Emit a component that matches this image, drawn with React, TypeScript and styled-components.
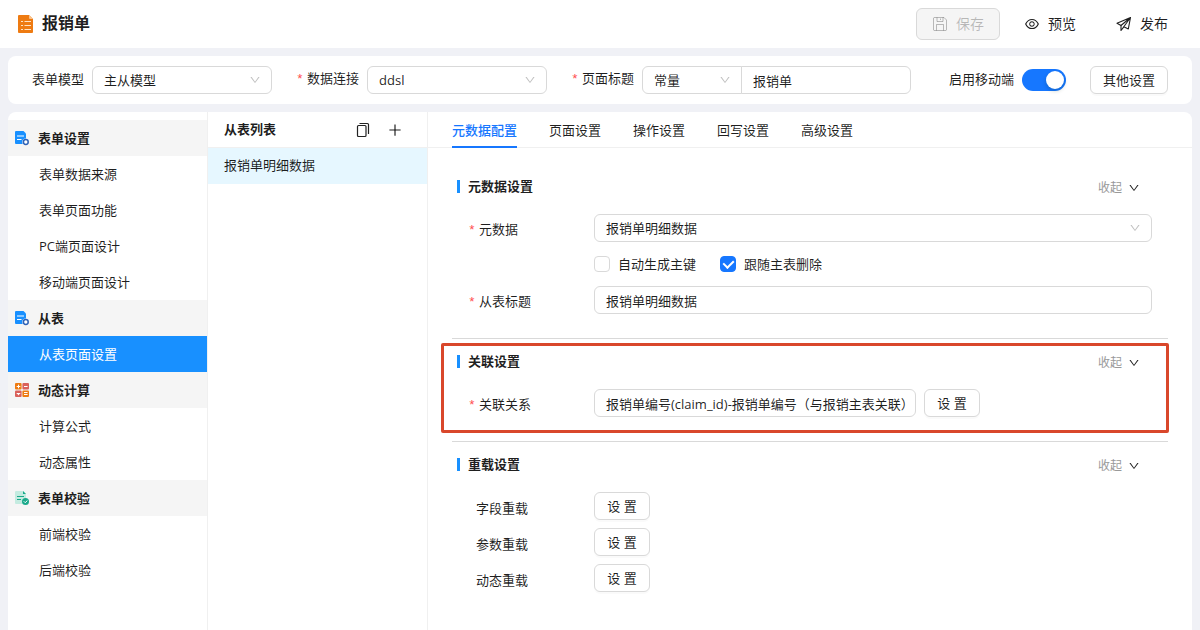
import React from "react";
import styled, { createGlobalStyle, css } from "styled-components";
import { AiOutlineDown, AiOutlineEye, AiOutlinePlus } from "react-icons/ai";

const GlobalStyle = createGlobalStyle`
  * { box-sizing: border-box; }
  body {
    margin: 0;
    background: #f0f1f6;
    color: rgba(0, 0, 0, 0.88);
    font: 13px/20px "Open Sans", "Noto Sans CJK SC", sans-serif;
  }
  button, input, select { font: inherit; color: inherit; }
`;

const Page = styled.div`
  display: flex;
  flex-direction: column;
  min-height: 100vh;
`;

const Header = styled.header`
  display: flex;
  align-items: center;
  gap: 8px;
  height: 48px;
  padding: 0 16px;
  background: #fff;
`;

const Title = styled.h1`
  flex: 1;
  margin: 0;
  padding-bottom: 2px;
  font-size: 16px;
  line-height: 24px;
  font-weight: 700;
`;

const HeaderButton = styled.button`
  display: flex;
  align-items: center;
  justify-content: center;
  gap: 8px;
  height: 32px;
  padding: 0 15px;
  border: 1px solid transparent;
  border-radius: 6px;
  background: transparent;
  font-size: 14px;
  svg { width: 16px; height: 16px; }
  &:disabled {
    border-color: #d9d9d9;
    background: #f5f5f5;
    color: rgba(0, 0, 0, 0.25);
  }
`;

const ConfigBar = styled.section`
  display: flex;
  align-items: center;
  gap: 24px;
  height: 48px;
  margin: 8px;
  padding: 0 24px;
  border-radius: 8px;
  background: #fff;
`;

const Field = styled.div<{ $end?: boolean }>`
  display: flex;
  align-items: center;
  gap: 8px;
  white-space: nowrap;
  ${(p) => p.$end && css`margin-left: auto;`}
`;

const requiredMark = css`
  &::before {
    content: "*";
    display: inline-block;
    width: 11px;
    color: #ff4d4f;
    font-family: "Liberation Mono", monospace;
  }
`;

const FieldLabel = styled.label<{ $required?: boolean }>`
  padding-bottom: 2px;
  ${(p) => p.$required && requiredMark}
`;

const controlBox = css`
  height: 28px;
  border: 1px solid #d9d9d9;
  border-radius: 6px;
  background: #fff;
`;

const SelectWrap = styled.div<{ $width?: number }>`
  position: relative;
  ${(p) => (p.$width ? css`width: ${p.$width}px;` : css`flex: 1;`)}
  svg {
    position: absolute;
    top: 8px;
    right: 11px;
    width: 12px;
    height: 12px;
    color: rgba(0, 0, 0, 0.25);
    pointer-events: none;
  }
`;

const SelectBox = styled.select`
  ${controlBox}
  display: block;
  width: 100%;
  padding: 0 32px 0 11px;
  appearance: none;
`;

const TextInput = styled.input<{ $width?: number }>`
  ${controlBox}
  padding: 0 4px 0 11px;
  min-width: 0;
  ${(p) => (p.$width ? css`width: ${p.$width}px;` : css`flex: 1;`)}
`;

const Compact = styled.div`
  display: flex;
  select { border-radius: 6px 0 0 6px; }
  input { margin-left: -1px; border-radius: 0 6px 6px 0; }
`;

const Switch = styled.input`
  display: flex;
  align-items: center;
  width: 44px;
  height: 22px;
  margin: 0;
  padding: 2px;
  border-radius: 11px;
  appearance: none;
  background: #bfbfbf;
  &::before {
    content: "";
    width: 18px;
    height: 18px;
    border-radius: 9px;
    background: #fff;
    box-shadow: 0 2px 4px rgba(0, 35, 11, 0.2);
  }
  &:checked {
    justify-content: flex-end;
    background: #1677ff;
  }
`;

const Button = styled.button`
  ${controlBox}
  min-width: 56px;
  padding: 0 12px;
  box-shadow: 0 2px 0 rgba(0, 0, 0, 0.02);
`;

const Workspace = styled.main`
  display: flex;
  flex: 1;
  margin: 0 8px;
  border-radius: 8px 8px 0 0;
  background: #fff;
`;

const Sidebar = styled.nav`
  flex: 0 0 200px;
  padding-top: 8px;
  border-right: 1px solid #f0f0f0;
`;

const GroupTitle = styled.h2`
  display: flex;
  align-items: center;
  gap: 8px;
  height: 36px;
  margin: 0;
  padding-left: 6px;
  background: #f5f5f5;
  font-size: 13px;
  font-weight: 700;
`;

const MenuLink = styled.a<{ $active?: boolean }>`
  display: flex;
  align-items: center;
  height: 36px;
  padding-left: 31px;
  color: ${(p) => (p.$active ? "#fff" : "inherit")};
  background: ${(p) => (p.$active ? "#1890ff" : "transparent")};
  text-decoration: none;
`;

const TableList = styled.aside`
  flex: 0 0 220px;
  border-right: 1px solid #f0f0f0;
`;

const ListHeader = styled.div`
  display: flex;
  align-items: center;
  gap: 16px;
  height: 36px;
  padding: 0 24px 0 16px;
  border-bottom: 1px solid #f0f0f0;
`;

const ListTitle = styled.h2`
  flex: 1;
  margin: 0;
  padding-bottom: 2px;
  font-size: 13px;
  font-weight: 600;
`;

const IconButton = styled.button`
  display: flex;
  padding: 0;
  border: 0;
  background: transparent;
`;

const ListItem = styled.a`
  display: flex;
  align-items: center;
  height: 36px;
  padding: 0 16px 2px;
  background: #e6f7ff;
  color: inherit;
  text-decoration: none;
`;

const Content = styled.div`
  flex: 1;
  min-width: 0;
`;

const Tabs = styled.div`
  display: flex;
  gap: 32px;
  height: 36px;
  padding: 0 24px;
  border-bottom: 1px solid #f0f0f0;
`;

const Tab = styled.button<{ $active?: boolean }>`
  height: 36px;
  padding: 2px 0 0;
  border: 0;
  border-bottom: 2px solid ${(p) => (p.$active ? "#1677ff" : "transparent")};
  background: transparent;
  color: ${(p) => (p.$active ? "#1677ff" : "inherit")};
  font-weight: ${(p) => (p.$active ? 500 : 400)};
`;

const Sections = styled.div`
  padding: 16px 24px;
`;

const Section = styled.section`
  position: relative;
  padding: 10px 0 24px;
  border-bottom: 1px solid #d9d9d9;
  &:last-child { border-bottom: 0; }
`;

const SectionHeader = styled.div`
  display: flex;
  align-items: center;
  justify-content: space-between;
  height: 24px;
  margin-bottom: 16px;
  padding: 0 28px 0 5px;
`;

const SectionTitle = styled.h3`
  display: flex;
  align-items: center;
  gap: 8px;
  margin: 0;
  font-size: 13px;
  font-weight: 700;
  &::before {
    content: "";
    width: 3px;
    height: 13px;
    background: #1890ff;
  }
`;

const Collapse = styled.button`
  display: flex;
  align-items: center;
  gap: 6px;
  padding: 3px 0 0;
  border: 0;
  background: transparent;
  color: #999;
  font-size: 12px;
  svg { width: 12px; height: 12px; color: #222; }
`;

const Rows = styled.div`
  display: flex;
  flex-direction: column;
  gap: 8px;
  padding-right: 16px;
`;

const Row = styled.div`
  display: flex;
  align-items: center;
  height: 28px;
`;

const RowLabel = styled.label<{ $required?: boolean }>`
  flex: 0 0 142px;
  padding: 4px 0 0 ${(p) => (p.$required ? 16 : 24)}px;
  ${(p) => p.$required && requiredMark}
`;

const RowControls = styled.div`
  display: flex;
  flex: 1;
  align-items: center;
  gap: 8px;
`;

const CheckLabel = styled.label`
  display: flex;
  align-items: center;
  gap: 8px;
  margin-right: 16px;
`;

const Checkbox = styled.input`
  display: grid;
  place-items: center;
  width: 16px;
  height: 16px;
  margin: 0;
  border: 1px solid #d9d9d9;
  border-radius: 4px;
  appearance: none;
  background: #fff;
  &:checked {
    border-color: #1677ff;
    background: #1677ff;
  }
  &:checked::before {
    content: "";
    width: 5px;
    height: 8px;
    margin-bottom: 2px;
    border: solid #fff;
    border-width: 0 2px 2px 0;
    transform: rotate(45deg);
  }
`;

const Highlight = styled.div`
  position: absolute;
  inset: 4px -1px 8px -11px;
  border: 3px solid #d9472b;
  border-radius: 2px;
  pointer-events: none;
`;

const LogoIcon = () => (
  <svg width="18" height="20" viewBox="0 0 18 20" aria-hidden="true">
    <path d="M3 1h10l4 4V18a1 1 0 0 1-1 1H3a1 1 0 0 1-1-1V2a1 1 0 0 1 1-1z" fill="#ee7b12" />
    <path d="M13 1v3a1 1 0 0 0 1 1H17z" fill="#f9c48e" />
    <path d="M5 7.500h2M8.500 7.500H15M5 11.500h2M8.500 11.500H15M5 15.500h2M8.500 15.500H15" stroke="#ffe3c4" strokeWidth="1.200" />
  </svg>
);

const SaveIcon = () => (
  <svg viewBox="0 0 16 16" fill="none" stroke="currentColor" aria-hidden="true">
    <path d="M1.500 2.500a1 1 0 0 1 1-1H12L14.500 4v9.500a1 1 0 0 1-1 1h-11a1 1 0 0 1-1-1z" />
    <path d="M5 1.500v4h6v-4M8.500 2.500v1.500M4.500 14.500V8.500h7v6" />
  </svg>
);

const SendIcon = () => (
  <svg viewBox="0 0 16 16" fill="none" stroke="currentColor" strokeWidth="1.100" strokeLinejoin="round" aria-hidden="true">
    <path d="M14.500 1.500L1 7.200l4 2.300L14.500 1.500L12.300 13L7.800 10.800z" />
    <path d="M5 9.500v5l2.800-3.700" />
  </svg>
);

const FormIcon = () => (
  <svg width="16" height="16" viewBox="0 0 16 16" aria-hidden="true">
    <path d="M1 2a1 1 0 0 1 1-1h7.500L12 3.500V14H2a1 1 0 0 1-1-1z" fill="#1890ff" />
    <path d="M3 6h7M3 9.500h4.500" stroke="#fff" strokeWidth="1.200" />
    <circle cx="11.800" cy="12" r="3.600" fill="#f5f5f5" />
    <circle cx="11.800" cy="12" r="2.400" fill="#fff" stroke="#2f62b5" strokeWidth="1.500" />
  </svg>
);

const CalcIcon = () => (
  <svg width="16" height="16" viewBox="0 0 16 16" aria-hidden="true">
    <rect x="1" y="1" width="6.600" height="6.600" rx="1" fill="#ee7b12" />
    <rect x="8.400" y="1" width="6.600" height="6.600" rx="1" fill="#d9605a" />
    <rect x="1" y="8.400" width="6.600" height="6.600" rx="1" fill="#d9605a" />
    <rect x="8.400" y="8.400" width="6.600" height="6.600" rx="1" fill="#ee7b12" />
    <path d="M2.700 4.500h3.600M4.500 2.700v3.600M10 4.500h3.600M2.700 11.500h3.600M10 10.500h3.600M10 12.500h3.600" stroke="#fff" />
    <path d="M3.500 12h2l-1 1.500z" fill="#fff" />
  </svg>
);

const CheckIcon = () => (
  <svg width="16" height="16" viewBox="0 0 16 16" aria-hidden="true">
    <path d="M1 2a1 1 0 0 1 1-1h7l3 3v10H2a1 1 0 0 1-1-1z" fill="#c4ebe0" />
    <path d="M9 1v3h3z" fill="#1aa98a" />
    <path d="M3 6.500h7M3 9.500h4" stroke="#1aa98a" strokeWidth="1.200" />
    <circle cx="11.500" cy="11.500" r="3.500" fill="#1aa98a" />
    <path d="M9.800 11.300l1.400 1.400 2.200-2.200" stroke="#fff" fill="none" />
  </svg>
);

const CopyIcon = () => (
  <svg width="16" height="16" viewBox="0 0 16 16" fill="none" stroke="#222" strokeWidth="1.200" aria-hidden="true">
    <rect x="2.500" y="3.500" width="8.500" height="11" rx="1" />
    <path d="M4.500 1.500H12.500a1 1 0 0 1 1 1V12" />
  </svg>
);

const menu = [
  { title: "表单设置", icon: <FormIcon />, items: ["表单数据来源", "表单页面功能", "PC端页面设计", "移动端页面设计"] },
  { title: "从表", icon: <FormIcon />, items: ["从表页面设置"] },
  { title: "动态计算", icon: <CalcIcon />, items: ["计算公式", "动态属性"] },
  { title: "表单校验", icon: <CheckIcon />, items: ["前端校验", "后端校验"] },
];

const activeItem = "从表页面设置";
const tabs = ["元数据配置", "页面设置", "操作设置", "回写设置", "高级设置"];
const overloads = ["字段重载", "参数重载", "动态重载"];

type SelectProps = { id?: string; value: string; width?: number; label?: string };

const Select = ({ id, value, width, label }: SelectProps) => (
  <SelectWrap $width={width}>
    <SelectBox id={id} defaultValue={value} aria-label={label}>
      <option>{value}</option>
    </SelectBox>
    <AiOutlineDown />
  </SelectWrap>
);

type PanelProps = { title: string; marked?: boolean; children: React.ReactNode };

const Panel = ({ title, marked, children }: PanelProps) => (
  <Section>
    <SectionHeader>
      <SectionTitle>{title}</SectionTitle>
      <Collapse type="button">
        收起
        <AiOutlineDown />
      </Collapse>
    </SectionHeader>
    <Rows>{children}</Rows>
    {marked && <Highlight />}
  </Section>
);

export default function App() {
  return (
    <Page>
      <GlobalStyle />
      <Header>
        <LogoIcon />
        <Title>报销单</Title>
        <HeaderButton type="button" disabled><SaveIcon />保存</HeaderButton>
        <HeaderButton type="button"><AiOutlineEye />预览</HeaderButton>
        <HeaderButton type="button"><SendIcon />发布</HeaderButton>
      </Header>

      <ConfigBar>
        <Field>
          <FieldLabel htmlFor="model">表单模型</FieldLabel>
          <Select id="model" value="主从模型" width={180} />
        </Field>
        <Field>
          <FieldLabel htmlFor="source" $required>数据连接</FieldLabel>
          <Select id="source" value="ddsl" width={180} />
        </Field>
        <Field>
          <FieldLabel htmlFor="page-title" $required>页面标题</FieldLabel>
          <Compact>
            <Select value="常量" width={100} label="标题类型" />
            <TextInput id="page-title" defaultValue="报销单" $width={170} />
          </Compact>
        </Field>
        <Field $end>
          <FieldLabel htmlFor="mobile">启用移动端</FieldLabel>
          <Switch id="mobile" type="checkbox" role="switch" defaultChecked />
        </Field>
        <Button type="button">其他设置</Button>
      </ConfigBar>

      <Workspace>
        <Sidebar>
          {menu.map((group) => (
            <React.Fragment key={group.title}>
              <GroupTitle>{group.icon}{group.title}</GroupTitle>
              {group.items.map((item) => (
                <MenuLink key={item} href="#" $active={item === activeItem}>{item}</MenuLink>
              ))}
            </React.Fragment>
          ))}
        </Sidebar>

        <TableList>
          <ListHeader>
            <ListTitle>从表列表</ListTitle>
            <IconButton type="button" aria-label="复制"><CopyIcon /></IconButton>
            <IconButton type="button" aria-label="新增"><AiOutlinePlus size={16} /></IconButton>
          </ListHeader>
          <ListItem href="#">报销单明细数据</ListItem>
        </TableList>

        <Content>
          <Tabs role="tablist">
            {tabs.map((tab, i) => (
              <Tab key={tab} type="button" role="tab" aria-selected={i === 0} $active={i === 0}>{tab}</Tab>
            ))}
          </Tabs>
          <Sections>
            <Panel title="元数据设置">
              <Row>
                <RowLabel htmlFor="meta" $required>元数据</RowLabel>
                <RowControls><Select id="meta" value="报销单明细数据" /></RowControls>
              </Row>
              <Row>
                <RowLabel as="span" />
                <RowControls>
                  <CheckLabel><Checkbox type="checkbox" />自动生成主键</CheckLabel>
                  <CheckLabel><Checkbox type="checkbox" defaultChecked />跟随主表删除</CheckLabel>
                </RowControls>
              </Row>
              <Row>
                <RowLabel htmlFor="sub-title" $required>从表标题</RowLabel>
                <RowControls><TextInput id="sub-title" defaultValue="报销单明细数据" /></RowControls>
              </Row>
            </Panel>

            <Panel title="关联设置" marked>
              <Row>
                <RowLabel htmlFor="relation" $required>关联关系</RowLabel>
                <RowControls>
                  <TextInput id="relation" $width={322} defaultValue="报销单编号(claim_id)-报销单编号（与报销主表关联）" />
                  <Button type="button">设 置</Button>
                </RowControls>
              </Row>
            </Panel>

            <Panel title="重载设置">
              {overloads.map((name, i) => (
                <Row key={name}>
                  <RowLabel htmlFor={`overload-${i}`}>{name}</RowLabel>
                  <RowControls><Button id={`overload-${i}`} type="button">设 置</Button></RowControls>
                </Row>
              ))}
            </Panel>
          </Sections>
        </Content>
      </Workspace>
    </Page>
  );
}
